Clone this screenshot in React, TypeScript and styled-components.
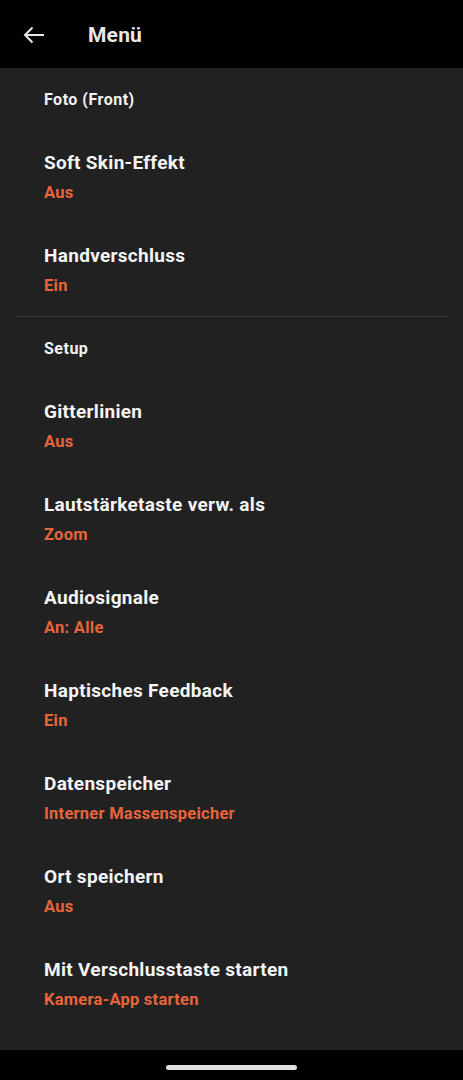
import styled, { createGlobalStyle } from 'styled-components';

const GlobalStyle = createGlobalStyle`
  html, body {
    margin: 0;
    padding: 0;
    background: #000;
  }
  * {
    box-sizing: border-box;
  }
`;

type Item = { title: string; value: string };
type Section = { name: string; items: Item[] };

const sections: Section[] = [
  {
    name: 'Foto (Front)',
    items: [
      { title: 'Soft Skin-Effekt', value: 'Aus' },
      { title: 'Handverschluss', value: 'Ein' },
    ],
  },
  {
    name: 'Setup',
    items: [
      { title: 'Gitterlinien', value: 'Aus' },
      { title: 'Lautstärketaste verw. als', value: 'Zoom' },
      { title: 'Audiosignale', value: 'An: Alle' },
      { title: 'Haptisches Feedback', value: 'Ein' },
      { title: 'Datenspeicher', value: 'Interner Massenspeicher' },
      { title: 'Ort speichern', value: 'Aus' },
      { title: 'Mit Verschlusstaste starten', value: 'Kamera-App starten' },
    ],
  },
];

function App() {
  return (
    <>
      <GlobalStyle />
      <Screen>
        <Toolbar>
          <BackButton aria-label='back'>
            <svg width='22' height='18' viewBox='0 0 22 18' fill='none'>
              <path
                d='M21 9H2.5M9.5 1.5L2 9l7.5 7.5'
                stroke='#e8e8e8'
                strokeWidth='2'
              />
            </svg>
          </BackButton>
          <Title>Menü</Title>
        </Toolbar>
        <Content>
          {sections.map((section, i) => (
            <div key={section.name}>
              {i > 0 && <Divider />}
              <SectionHeader>{section.name}</SectionHeader>
              {section.items.map((item) => (
                <Row key={item.title}>
                  <RowTitle>{item.title}</RowTitle>
                  <RowValue>{item.value}</RowValue>
                </Row>
              ))}
            </div>
          ))}
        </Content>
        <NavBar>
          <Handle />
        </NavBar>
      </Screen>
    </>
  );
}

const Screen = styled.div`
  height: 100vh;
  display: flex;
  flex-direction: column;
  font-family: Roboto, 'Noto Sans', sans-serif;
  color: #f2f2f2;
`;

const Toolbar = styled.div`
  height: 68px;
  flex-shrink: 0;
  background: #000;
  display: flex;
  align-items: center;
  padding: 1px 0 0 23px;
`;

const BackButton = styled.div`
  width: 22px;
  height: 18px;
  display: flex;
  margin-right: 43px;
`;

const Title = styled.h1`
  margin: 0;
  font-size: 21px;
  font-weight: 700;
  color: #e8e8e8;
  letter-spacing: 0.2px;
`;

const Content = styled.div`
  flex: 1;
  background: #212121;
  overflow: hidden;
`;

const SectionHeader = styled.div`
  height: 62px;
  padding: 22px 44px 0;
  font-size: 16px;
  line-height: 20px;
  font-weight: 700;
  letter-spacing: 0.5px;
  color: #f2f2f2;
`;

const Divider = styled.div`
  height: 1px;
  margin: 0 15px;
  background: #3a3a3a;
`;

const Row = styled.div`
  height: 93px;
  padding: 21px 44px 0;
  display: flex;
  flex-direction: column;
`;

const RowTitle = styled.div`
  font-size: 19px;
  line-height: 24px;
  font-weight: 700;
  letter-spacing: 0.3px;
  color: #f4f4f4;
`;

const RowValue = styled.div`
  margin-top: 7px;
  font-size: 16.5px;
  line-height: 22px;
  font-weight: 700;
  letter-spacing: 0.25px;
  color: #e8643a;
`;

const NavBar = styled.div`
  height: 30px;
  flex-shrink: 0;
  background: #000;
  display: flex;
  justify-content: center;
  padding-top: 15px;
`;

const Handle = styled.div`
  width: 131px;
  height: 5px;
  border-radius: 3px;
  background: #e0e0e0;
`;

export default App;
